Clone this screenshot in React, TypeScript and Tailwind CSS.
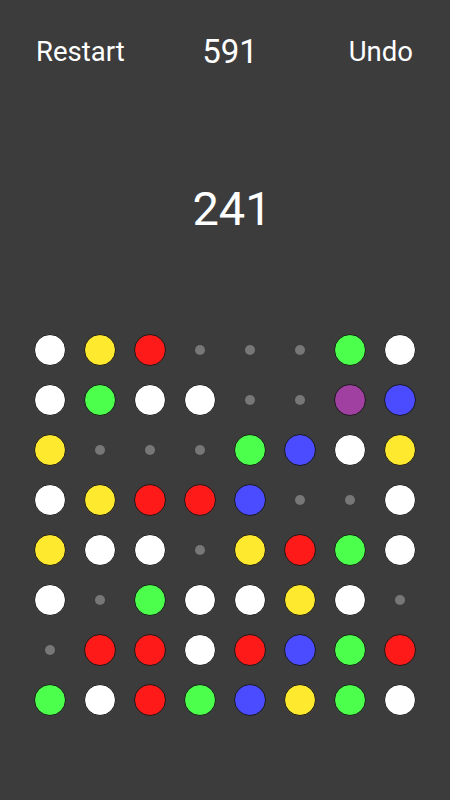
import React from "react";

const C: Record<string, string> = {
  W: "bg-white",
  Y: "bg-[#ffe92e]",
  R: "bg-[#ff1a1a]",
  G: "bg-[#4cff4c]",
  B: "bg-[#4b4bff]",
  P: "bg-[#a040a0]",
};

const rows = [
  "WYR...GW",
  "WGWW..PB",
  "Y...GBWY",
  "WYRRB..W",
  "YWW.YRGW",
  "W.GWWYW.",
  ".RRWRBGR",
  "GWRGBYGW",
];

export default function App() {
  return (
    <div
      className="w-[450px] h-[800px] bg-[#3c3c3c] text-white flex flex-col"
      style={{ fontFamily: "Roboto, 'Liberation Sans', sans-serif" }}
    >
      <div className="h-[104px] pl-[36px] pr-[37px] grid grid-cols-[1fr_auto_1fr] items-center">
        <span className="text-[27.5px]">Restart</span>
        <span className="text-[33px] pl-[11px]">591</span>
        <span className="text-[27.5px] text-right">Undo</span>
      </div>
      <div className="h-[210px] flex items-center justify-center">
        <span className="text-[47px] pl-[14px]">241</span>
      </div>
      <div className="mt-[11px] mx-[25px] grid grid-cols-8">
        {rows.map((r, i) =>
          r.split("").map((ch, j) => (
            <div key={`${i}-${j}`} className="h-[50px] flex items-center justify-center">
              {ch === "." ? (
                <div className="w-[10px] h-[10px] rounded-full bg-[#777777]" />
              ) : (
                <div className={`w-[32px] h-[32px] rounded-full border border-[#1a1a1a] ${C[ch]}`} />
              )}
            </div>
          ))
        )}
      </div>
    </div>
  );
}
